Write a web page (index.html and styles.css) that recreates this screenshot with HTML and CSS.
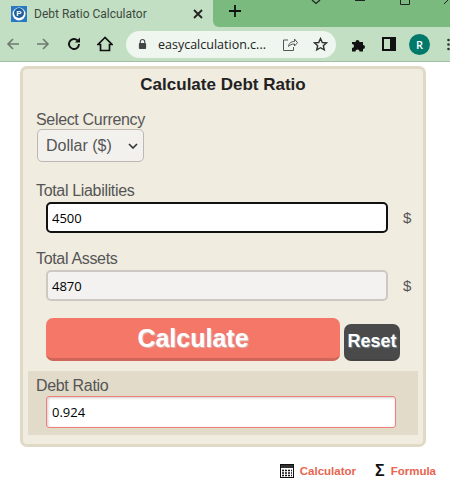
FILE: index.html
```html
<!DOCTYPE html>
<html lang="en">
<head>
    <meta charset="UTF-8">
    <title>Debt Ratio Calculator</title>
    <link rel="stylesheet" href="styles.css">
</head>
<body>
    <div class="tabstrip">
        <div class="tab">
            <svg class="favicon" width="16" height="16" viewBox="0 0 16 16">
                <rect width="16" height="16" fill="#2a78c0"/>
                <circle cx="8" cy="8" r="6.5" fill="#fff"/>
                <circle cx="8" cy="7" r="5" fill="#1d5f9e"/>
                <text x="8" y="10" class="favicon-text">P</text>
            </svg>
            <span class="tab-title">Debt Ratio Calculator</span>
            <svg class="tab-close" width="10" height="10" viewBox="0 0 10 10">
                <path d="M1 1l8 8M9 1l-8 8" stroke="#222" stroke-width="1.8"/>
            </svg>
        </div>
        <div class="tab-rest">
            <svg width="14" height="14" viewBox="0 0 14 14">
                <path d="M7 1v12M1 7h12" stroke="#111" stroke-width="1.8"/>
            </svg>
            <svg class="caption" width="197" height="6" viewBox="0 0 197 6">
                <path d="M59 0l4 3.500 4-3.500" fill="none" stroke="#222" stroke-width="1.200"/>
                <path d="M102 .5h10" stroke="#222"/>
                <path d="M147.500 0v4.500h9v-4.500" fill="none" stroke="#222"/>
                <path d="M191 4l5-5" stroke="#222"/>
            </svg>
        </div>
    </div>

    <div class="toolbar">
        <svg class="nav back" width="14" height="14" viewBox="0 0 14 14">
            <path d="M13 7H2M7 2L2 7l5 5" fill="none" stroke="#6f7a70" stroke-width="1.600"/>
        </svg>
        <svg class="nav forward" width="14" height="14" viewBox="0 0 14 14">
            <path d="M1 7h11M7 2l5 5-5 5" fill="none" stroke="#6f7a70" stroke-width="1.600"/>
        </svg>
        <svg class="nav reload" width="16" height="16" viewBox="0 0 16 16">
            <path d="M13 8a5 5 0 1 1-1.500-3.600" fill="none" stroke="#111" stroke-width="1.900"/>
            <path d="M14 1.500v5H9z" fill="#111"/>
        </svg>
        <svg class="nav home" width="16" height="16" viewBox="0 0 16 16">
            <path d="M8 1.500L1 8.500h2.500v6h9v-6H15z" fill="none" stroke="#111" stroke-width="1.700"/>
        </svg>
        <div class="omnibox">
            <svg width="9" height="12" viewBox="0 0 10 12">
                <path d="M2.500 5V3.500a2.500 2.500 0 0 1 5 0V5" fill="none" stroke="#444" stroke-width="1.200"/>
                <rect x="1" y="5" width="8" height="6.500" rx="1" fill="#444"/>
            </svg>
            <span class="url">easycalculation.c...</span>
            <svg width="16" height="15" viewBox="0 0 16 15">
                <path d="M6 3H1.500v10.500h10V10M6.500 9.500c0-3 2.500-5 6-5V2l3 3.700-3 3.300V7c-2.500 0-4.500 .8-6 2.500z" fill="none" stroke="#555" stroke-width="1"/>
            </svg>
            <svg class="star" width="15" height="15" viewBox="0 0 15 15">
                <path d="M7.500 1.500l1.800 4 4.200 .4-3.200 2.800 1 4.200-3.800-2.200-3.800 2.200 1-4.200L1.500 5.900l4.200-.4z" fill="none" stroke="#333" stroke-width="1.400"/>
            </svg>
        </div>
        <svg class="ext" width="15" height="15" viewBox="0 0 15 15">
            <path d="M1 5h3.500a2 2 0 1 1 4 0H12v3a2 2 0 1 1 0 4v2.500H8.500a2 2 0 1 0-4 0H1v-3.500a2 2 0 1 0 0-4z" fill="#111"/>
        </svg>
        <svg class="side" width="14" height="14" viewBox="0 0 14 14">
            <rect x="1" y="1" width="12" height="12" fill="none" stroke="#111" stroke-width="2"/>
            <rect x="8" y="1" width="5" height="12" fill="#111"/>
        </svg>
        <div class="avatar">R</div>
        <svg class="dots" width="3" height="14" viewBox="0 0 3 14">
            <circle cx="1.500" cy="3" r="1.300" fill="#333"/>
            <circle cx="1.500" cy="7.500" r="1.300" fill="#333"/>
            <circle cx="1.500" cy="12" r="1.300" fill="#333"/>
        </svg>
    </div>

    <div class="page">
        <div class="card">
            <h1 class="card-title">Calculate Debt Ratio</h1>

            <div class="label first-label">Select Currency</div>
            <div class="select-box">
                <span>Dollar ($)</span>
                <svg width="10" height="6" viewBox="0 0 10 6">
                    <path d="M1 1l4 4 4-4" fill="none" stroke="#333" stroke-width="1.600"/>
                </svg>
            </div>

            <div class="label liabilities-label">Total Liabilities</div>
            <div class="field-row">
                <input class="field field-focus" type="text" value="4500">
                <span class="unit">$</span>
            </div>

            <div class="label assets-label">Total Assets</div>
            <div class="field-row">
                <input class="field field-grey" type="text" value="4870">
                <span class="unit">$</span>
            </div>

            <div class="buttons">
                <button class="btn-calc">Calculate</button>
                <button class="btn-reset">Reset</button>
            </div>

            <div class="result">
                <div class="label">Debt Ratio</div>
                <input class="field field-result" type="text" value="0.924">
            </div>
        </div>

        <div class="links">
            <a class="link">
                <svg width="14" height="14" viewBox="0 0 14 14">
                    <rect x=".5" y=".5" width="13" height="13" fill="#fff" stroke="#111"/>
                    <rect x="1" y="1" width="12" height="3" fill="#333"/>
                    <path d="M2 6.500h10M2 9h10M2 11.500h10" stroke="#111" stroke-width="1.500" stroke-dasharray="2 1"/>
                </svg>
                Calculator
            </a>
            <a class="link">
                <span class="sigma">Σ</span>
                Formula
            </a>
        </div>
    </div>
</body>
</html>
```

FILE: styles.css
```css
body {
    margin: 0;
    width: 450px;
    height: 481px;
    overflow: hidden;
    background-color: white;
    font-family: "Liberation Sans", Arial, sans-serif;
}

/* browser chrome */
.tabstrip {
    display: flex;
    height: 27px;
    background-color: #c3dfc3;
}
.tab {
    display: flex;
    align-items: center;
    width: 213px;
    padding-left: 11px;
    box-sizing: border-box;
}
.favicon-text {
    font-family: "Liberation Sans", sans-serif;
    font-size: 8px;
    font-weight: bold;
    fill: white;
    text-anchor: middle;
}
.tab-title {
    width: 159px;
    flex: none;
    margin-left: 7px;
    font-family: "Roboto", sans-serif;
    font-size: 12px;
    color: #3c4a40;
    white-space: nowrap;
}
.tab-rest {
    flex: 1;
    display: flex;
    align-items: flex-start;
    padding: 4px 0 0 15px;
    background-color: #7aba7e;
    border-radius: 0 0 0 6px;
    position: relative;
}
.caption {
    position: absolute;
    top: 0;
    left: 40px;
}
.toolbar {
    display: flex;
    align-items: center;
    height: 34px;
    padding-left: 6px;
    background-color: #c3dfc3;
    border-bottom: 1px solid #a3bfa5;
}
.nav {
    flex: none;
}
.back, .forward {
    margin-right: 16px;
}
.reload {
    margin-right: 15px;
}
.home {
    margin-right: 13px;
}
.omnibox {
    display: flex;
    align-items: center;
    width: 210px;
    height: 27px;
    padding-left: 12px;
    box-sizing: border-box;
    background-color: #eef6ef;
    border-radius: 14px;
    flex: none;
}
.url {
    width: 109px;
    flex: none;
    margin: 0 15px 0 11px;
    font-family: "Open Sans", sans-serif;
    font-size: 12.5px;
    color: #222;
    white-space: nowrap;
}
.star {
    margin-left: 15px;
}
.ext {
    margin-left: 15px;
    flex: none;
}
.side {
    margin-left: 16px;
    flex: none;
}
.avatar {
    width: 21px;
    height: 21px;
    margin-left: 13px;
    flex: none;
    border-radius: 50%;
    background-color: #00796b;
    color: white;
    font-family: "Open Sans", sans-serif;
    font-size: 11px;
    font-weight: 600;
    line-height: 21px;
    text-align: center;
}
.dots {
    margin-left: 17px;
    flex: none;
}

/* calculator */
.page {
    padding: 4px 0 0 20px;
}
.card {
    width: 406px;
    height: 381px;
    box-sizing: border-box;
    padding: 0 5px;
    background-color: #f0ece0;
    border: 3px solid #e0d9c6;
    border-radius: 7px;
}
.card-title {
    margin: 6px 0 0;
    font-size: 17px;
    line-height: 20px;
    font-weight: bold;
    color: #222;
    text-align: center;
}
.label {
    padding-left: 8px;
    font-size: 16px;
    letter-spacing: -0.33px;
    line-height: 18px;
    color: #555;
}
.first-label {
    margin-top: 16px;
}
.select-box {
    display: flex;
    align-items: center;
    justify-content: space-between;
    width: 107px;
    height: 33px;
    margin-left: 9px;
    padding: 0 5px 0 8px;
    box-sizing: border-box;
    background-color: #f3f1ee;
    border: 1px solid #bdb9b2;
    border-radius: 5px;
    font-size: 16px;
    color: #555;
}
.liabilities-label {
    margin-top: 20px;
}
.assets-label {
    margin-top: 17px;
}
.field-row {
    display: flex;
    align-items: center;
    margin: 2px 0 0 18px;
}
.field {
    display: block;
    height: 31px;
    margin: 0;
    padding: 0 0 0 4px;
    box-sizing: border-box;
    font-family: "Open Sans", sans-serif;
    font-size: 13px;
    color: black;
    outline: none;
}
.field-row .field {
    width: 342px;
}
.field-focus {
    background-color: white;
    border: 2px solid #111;
    border-radius: 5px;
}
.field-grey {
    background-color: #f3f2f0;
    border: 2px solid #cdc9c2;
    border-radius: 5px;
}
.unit {
    margin-left: 15px;
    font-size: 15px;
    color: #555;
}
.buttons {
    display: flex;
    align-items: flex-end;
    gap: 4px;
    margin: 17px 0 0 18px;
}
.btn-calc {
    width: 294px;
    height: 43px;
    padding: 0;
    background-color: #f47768;
    border: none;
    border-bottom: 3px solid #d0655a;
    border-radius: 7px;
    color: white;
    font-family: "Liberation Sans", sans-serif;
    font-size: 25px;
    font-weight: bold;
    text-shadow: 1px 1px 1px rgba(200, 235, 235, 0.6);
}
.btn-reset {
    width: 56px;
    height: 37px;
    padding: 0;
    background-color: #4a4a4a;
    border: none;
    border-bottom: 2px solid #444;
    border-radius: 7px;
    color: white;
    font-family: "Liberation Sans", sans-serif;
    font-size: 18px;
    font-weight: bold;
    text-shadow: 1px 1px 1px rgba(200, 235, 235, 0.4);
}
.result {
    height: 64px;
    margin-top: 10px;
    padding-top: 6px;
    box-sizing: border-box;
    background-color: #e2dbc9;
}
.result .field {
    width: 350px;
    height: 32px;
    margin: 1px 0 0 18px;
    padding-left: 5px;
    background-color: white;
    border: 1px solid #ef8078;
    border-radius: 3px;
    box-shadow: inset 1px 1px 3px rgba(0, 0, 0, 0.2);
}
.links {
    display: flex;
    justify-content: flex-end;
    align-items: center;
    gap: 19px;
    padding: 17px 14px 0 0;
}
.link {
    display: flex;
    align-items: center;
    gap: 6px;
    font-size: 11.5px;
    font-weight: bold;
    color: #e8644f;
}
.sigma {
    font-size: 16px;
    line-height: 14px;
    color: #111;
}
```
